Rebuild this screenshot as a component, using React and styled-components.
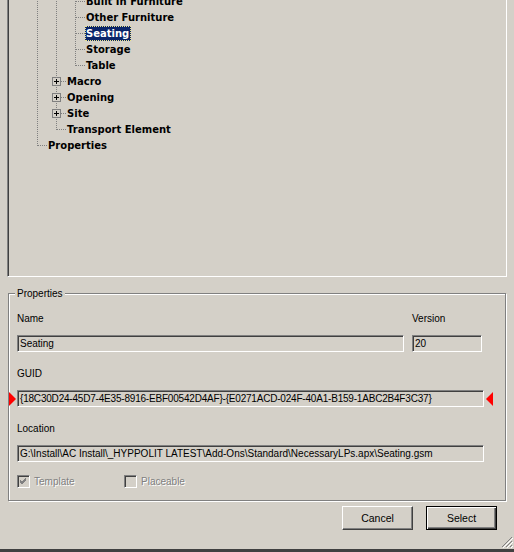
import React from 'react';
import styled, { createGlobalStyle, css } from 'styled-components';

const GlobalStyle = createGlobalStyle`
  html, body {
    margin: 0;
    padding: 0;
    background: #d4d0c8;
    overflow: hidden;
  }
  body {
    font-family: "Liberation Sans", Arial, sans-serif;
    font-size: 10px;
    color: #000;
  }
`;

const Window = styled.div`
  position: relative;
  width: 514px;
  height: 552px;
  box-sizing: border-box;
  display: flex;
  flex-direction: column;
  border-bottom: 3px solid #404040;
  overflow: hidden;
`;

// ---------- tree ----------

const TreePanel = styled.div`
  margin: -20px 7px 0 7px;
  height: 297px;
  box-sizing: border-box;
  border: 1px solid;
  border-color: #808080 #fff #fff #808080;
  box-shadow: inset 1px 1px 0 #404040, inset -1px -1px 0 #d4d0c8;
  padding: 12px 0 0 20px;
  font-family: "DejaVu Sans", Verdana, sans-serif;
  font-weight: bold;
  font-size: 10px;
`;

const Row = styled.div`
  display: flex;
  align-items: center;
  height: 16px;
`;

const dotsV = 'repeating-linear-gradient(to bottom, #808080 0 1px, transparent 1px 2px)';
const dotsH = 'repeating-linear-gradient(to right, #808080 0 1px, transparent 1px 2px)';

const Guide = styled.span`
  position: relative;
  flex: none;
  width: 19px;
  height: 16px;

  &::before {
    content: '';
    position: absolute;
    left: 9px;
    top: 0;
    width: 1px;
    height: ${(p) => (p.$v === 'full' ? '16px' : p.$v === 'half' ? '9px' : '0')};
    background: ${dotsV};
  }

  ${(p) =>
    p.$h &&
    css`
      &::after {
        content: '';
        position: absolute;
        left: 10px;
        right: 0;
        top: 8px;
        height: 1px;
        background: ${dotsH};
      }
    `}
`;

const Expander = styled.span`
  position: absolute;
  z-index: 1;
  left: 5px;
  top: 4px;
  width: 9px;
  height: 9px;
  box-sizing: border-box;
  border: 1px solid #808080;
  background: #d4d0c8;

  &::before {
    content: '';
    position: absolute;
    left: 1px;
    top: 3px;
    width: 5px;
    height: 1px;
    background: #000;
  }
  &::after {
    content: '';
    position: absolute;
    left: 3px;
    top: 1px;
    width: 1px;
    height: 5px;
    background: #000;
  }
`;

const NodeLabel = styled.span`
  height: 15px;
  line-height: 15px;
  padding: 0 2px 0 1px;
  white-space: nowrap;
  ${(p) =>
    p.$selected &&
    css`
      background: #0a246a;
      color: #fff;
      outline: 1px dotted #ece48a;
      outline-offset: -1px;
    `}
`;

const treeRows = [
  { label: 'Built In Furniture', guides: ['full', 'full', 'T'] },
  { label: 'Other Furniture', guides: ['full', 'full', 'T'] },
  { label: 'Seating', guides: ['full', 'full', 'T'], selected: true },
  { label: 'Storage', guides: ['full', 'full', 'T'] },
  { label: 'Table', guides: ['full', 'full', 'L'] },
  { label: 'Macro', guides: ['full', 'T'], plus: true },
  { label: 'Opening', guides: ['full', 'T'], plus: true },
  { label: 'Site', guides: ['full', 'T'], plus: true },
  { label: 'Transport Element', guides: ['full', 'L'] },
  { label: 'Properties', guides: ['L'] },
];

const TreeRow = ({ row }) => (
  <Row>
    {row.guides.map((g, i) => {
      const last = i === row.guides.length - 1;
      const v = g === 'L' ? 'half' : 'full';
      return (
        <Guide key={i} $v={v} $h={last}>
          {last && row.plus && <Expander />}
        </Guide>
      );
    })}
    <NodeLabel $selected={row.selected}>{row.label}</NodeLabel>
  </Row>
);

// ---------- properties group ----------

const Group = styled.div`
  position: relative;
  margin: 16px 0 0 8px;
  width: 498px;
  height: 208px;
  box-sizing: border-box;
  border: 1px solid #808080;
  box-shadow: inset 1px 1px 0 #fff, 1px 1px 0 #fff;
  padding: 18px 0 0 8px;
`;

const Legend = styled.span`
  position: absolute;
  top: -7px;
  left: 6px;
  padding: 0 2px;
  height: 13px;
  line-height: 13px;
  background: #d4d0c8;
`;

const FieldRow = styled.div`
  display: flex;
  gap: 8px;
`;

const Field = styled.div`
  display: flex;
  flex-direction: column;
  width: ${(p) => p.$width}px;
  margin-top: ${(p) => p.$top || 0}px;
`;

const Label = styled.div`
  height: 13px;
  line-height: 13px;
  margin-bottom: 10px;
`;

const TextBox = styled.div`
  height: 17px;
  width: ${(p) => (p.$width ? `${p.$width}px` : '100%')};
  box-sizing: border-box;
  border: 1px solid;
  border-color: #808080 #fff #fff #808080;
  box-shadow: inset 1px 1px 0 #404040, inset -1px -1px 0 #d4d0c8;
  padding: 0 2px;
  line-height: 15px;
  letter-spacing: ${(p) => (p.$tight ? '-0.2px' : 'normal')};
  white-space: nowrap;
  overflow: hidden;
  flex: none;
`;

const MarkedRow = styled.div`
  display: flex;
  align-items: center;
  margin-left: -8px;
`;

const Marker = styled.span`
  flex: none;
  width: 0;
  height: 0;
  border-top: 7px solid transparent;
  border-bottom: 7px solid transparent;
  ${(p) =>
    p.$dir === 'right'
      ? css`
          border-left: 7px solid #ff0000;
          margin-right: 1px;
        `
      : css`
          border-right: 7px solid #ff0000;
          margin-left: 2px;
        `}
`;

const CheckRow = styled.div`
  display: flex;
  margin-top: 13px;
`;

const CheckItem = styled.label`
  display: flex;
  align-items: center;
  gap: 4px;
  width: ${(p) => p.$width}px;
  height: 13px;
  color: #808080;
  text-shadow: 1px 1px 0 #fff;
`;

const CheckBox = styled.span`
  width: 13px;
  height: 13px;
  box-sizing: border-box;
  border: 1px solid;
  border-color: #808080 #fff #fff #808080;
  box-shadow: inset 1px 1px 0 #404040, inset -1px -1px 0 #d4d0c8;
  display: flex;
  align-items: center;
  justify-content: center;
  flex: none;
`;

// ---------- buttons ----------

const ButtonRow = styled.div`
  display: flex;
  justify-content: flex-end;
  gap: 13px;
  margin-top: 5px;
  padding-right: 17px;
`;

const Button = styled.button`
  width: 71px;
  height: 24px;
  box-sizing: border-box;
  font: inherit;
  font-size: 10.5px;
  color: #000;
  background: #d4d0c8;
  padding: 0;
  border: 1px solid;
  ${(p) =>
    p.$default
      ? css`
          border-color: #000;
          box-shadow: inset 1px 1px 0 #fff, inset -1px -1px 0 #404040, inset -2px -2px 0 #808080;
        `
      : css`
          border-color: #fff #404040 #404040 #fff;
          box-shadow: inset -1px -1px 0 #808080;
        `}
`;

const Grip = styled.svg`
  position: absolute;
  right: 1px;
  bottom: 1px;
`;

const CheckMark = () => (
  <svg width="7" height="7" viewBox="0 0 7 7">
    <path d="M0 2 L2 4 L6 0 M0 3 L2 5 L6 1 M0 4 L2 6 L6 2" stroke="#808080" strokeWidth="1" fill="none" shapeRendering="crispEdges" />
  </svg>
);

export default function App() {
  return (
    <Window>
      <GlobalStyle />
      <TreePanel>
        {treeRows.map((r) => (
          <TreeRow key={r.label} row={r} />
        ))}
      </TreePanel>

      <Group>
        <Legend>Properties</Legend>
        <FieldRow>
          <Field $width={387}>
            <Label>Name</Label>
            <TextBox>Seating</TextBox>
          </Field>
          <Field $width={70}>
            <Label>Version</Label>
            <TextBox>20</TextBox>
          </Field>
        </FieldRow>

        <Field $width={490} $top={15}>
          <Label>GUID</Label>
          <MarkedRow>
            <Marker $dir="right" />
            <TextBox $width={467} $tight>
              {'{18C30D24-45D7-4E35-8916-EBF00542D4AF}-{E0271ACD-024F-40A1-B159-1ABC2B4F3C37}'}
            </TextBox>
            <Marker $dir="left" />
          </MarkedRow>
        </Field>

        <Field $width={467} $top={15}>
          <Label>Location</Label>
          <TextBox>
            {'G:\\Install\\AC Install\\_HYPPOLIT LATEST\\Add-Ons\\Standard\\NecessaryLPs.apx\\Seating.gsm'}
          </TextBox>
        </Field>

        <CheckRow>
          <CheckItem $width={107}>
            <CheckBox>
              <CheckMark />
            </CheckBox>
            Template
          </CheckItem>
          <CheckItem $width={100}>
            <CheckBox />
            Placeable
          </CheckItem>
        </CheckRow>
      </Group>

      <ButtonRow>
        <Button>Cancel</Button>
        <Button $default>Select</Button>
      </ButtonRow>

      <Grip width="12" height="12" viewBox="0 0 12 12">
        <path d="M11 1 L1 11 M11 5 L5 11 M11 9 L9 11" stroke="#808080" strokeWidth="1" />
        <path d="M12 2 L2 12 M12 6 L6 12 M12 10 L10 12" stroke="#fff" strokeWidth="1" />
      </Grip>
    </Window>
  );
}
